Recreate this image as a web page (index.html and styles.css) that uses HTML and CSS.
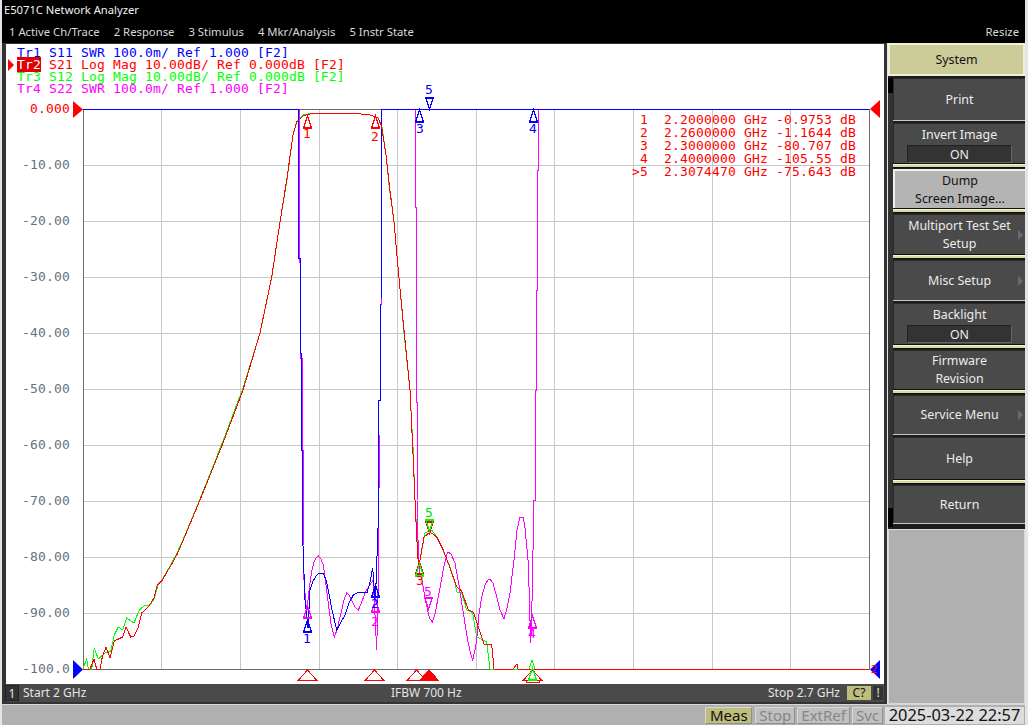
FILE: index.html
```html
<!doctype html>
<html lang="en">
<head>
	<meta charset="utf-8" />
	<title>E5071C Network Analyzer</title>
	<link rel="stylesheet" href="styles.css">
</head>
<body>
	<div class="app">
		<header class="top">
			<div class="title">E5071C Network Analyzer</div>
			<nav class="menu">
				<span>1 Active Ch/Trace</span>
				<span>2 Response</span>
				<span>3 Stimulus</span>
				<span>4 Mkr/Analysis</span>
				<span>5 Instr State</span>
				<span class="resize">Resize</span>
			</nav>
		</header>

		<div class="main">
			<section class="chan">
				<div class="plot">
					<svg class="canvas" viewBox="6 44 878 640" width="878" height="640">
						<defs>
							<path id="up" d="M0 0L-4 12H4ZM-4 11H4"/>
							<path id="down" d="M0 0L-4 -12H4ZM-4 -11H4"/>
							<path id="base" d="M0 0L-9 10H9Z"/>
						</defs>
						<!-- grid -->
						<path class="grid" d="M161.5 109V669M240.5 109V669M319.5 109V669M397.5 109V669M476.5 109V669M554.5 109V669M633.5 109V669M712.5 109V669M790.5 109V669"/>
						<path class="grid" d="M83 165.5H869M83 221.5H869M83 277.5H869M83 333.5H869M83 389.5H869M83 445.5H869M83 501.5H869M83 557.5H869M83 613.5H869"/>
						<path class="frame" d="M83.5 109.5V669.5H869.5V109.5H83.5"/>
						<!-- tick labels -->
						<text class="tick active" x="70" y="113">0.000</text>
						<text class="tick" x="70" y="169">-10.00</text>
						<text class="tick" x="70" y="225">-20.00</text>
						<text class="tick" x="70" y="281">-30.00</text>
						<text class="tick" x="70" y="337">-40.00</text>
						<text class="tick" x="70" y="393">-50.00</text>
						<text class="tick" x="70" y="449">-60.00</text>
						<text class="tick" x="70" y="505">-70.00</text>
						<text class="tick" x="70" y="561">-80.00</text>
						<text class="tick" x="70" y="617">-90.00</text>
						<text class="tick" x="70" y="673">-100.0</text>
						<!-- traces -->
						<polyline class="tr tr3" points="83,669 86.7,659 88.3,669 91.7,669 94.3,648 98.3,659 105,653 110.7,651 114.3,635 118.3,627 122.7,630 126.7,618 134,623 139.3,610 144,606 150,605 154,599 158,585 162,580 170,566 177,553 183,540 200,499 223,441 243,388 260,333 272,276 280,222 287,180 293,135 297,121 303,115 313,113 351,113 370,115 378,118 382,127 386,155 389,185 394,222 399,278 404,333 410,390 413,447 415,500 417,537 418.5,563 420,560 425,533 431.7,530 437,537 443,550 450,567 455,583 456.7,592 461.7,593 466.7,610 472.7,613 476.7,637 486.7,642 490,669 869,669"/>
						<polyline class="tr tr4" points="83,109 299,109 299,262 300,262 300,358 302,358 302,450 303,450 303,545 304,580 306.7,613 308,600 310,583 312,570 314,562 316,558 318.3,556 321,559 323.3,565 326,585 328.3,603 331,624 334.3,637 337,630 341.7,610 344,600 346.7,593 349,595 351.7,600 355,607 358.3,610 361,604 365,593 369,586 373.3,580 376.7,650 378.3,580 379,520 379,488 380,435 380,397 381,350 381,306 382,208 382,109 415,109 415,207 416,207 416,402 417,402 417,500 418,540 419.3,570 422,580 425,598 428,612 430,619 432.3,622 435,614 440,588 444,566 447,554 448.3,552 451,554 455,563 459,585 463.3,613 468,642 471,655 472.7,660 475,650 476.7,640 479,614 481.7,597 485,585 488,580 490,579 493,583 496.7,597 500,610 504,619 507,608 510,593 514,560 517,530 520,517 523.3,517 525,528 528.3,563 530.7,643 531.7,617 534,500 535,500 535,390 536,390 536,290 537,290 537,170 538,170 538,109 869,109"/>
						<polyline class="tr tr1" points="83,109 298.5,109 299,258 300,258 300,353 301,353 301,450 302,450 302,545 303,546 305,600 308,628 310,590 313,581 316.7,575 320,573 323.3,573 326,580 328.3,590 332,610 336.7,630 340,624 345,615 349,603 353.3,595 357,593 360,592 367.3,592 370,582 372.7,568 375,600 376,585 378.3,520 379,400 380,400 380,310 381,310 381.5,109 869,109"/>
						<polyline class="tr tr2" points="83,669 90,669 94,659 96.7,669 100,669 102.3,657 106,647 110,658 114.3,641 122.7,637 126,627 130.7,637 134.3,636 138.3,627 141.7,613 148.3,607 154,598 157.3,585 161.7,581 170,567 177.3,554 183.3,540 200,500 223,443 243,390 260,333 271.7,277 280,222 286.7,180 293,135 296.7,122 303,116 313,113 351.7,113 370,115 378.3,118 381.7,127 386,155 389.3,185 394,222 399,278 404.3,333 410,390 412.7,447 415,500 416.7,537 418.3,563 420,560 424,537 430,532 436.7,537 443.3,550 450,568 456.7,587 461.7,591 468.3,610 473.3,612 476.7,622 484,644 491.7,644 494,669 513,669 517,664 518,669 869,669"/>
						<polyline class="tr tr3" points="529,669 532,660 535,669"/>
						<!-- markers -->
						<g class="mk mk-s21">
							<use href="#up" x="307.5" y="116"/>
							<use href="#up" x="375.5" y="116"/>
							<use href="#up" x="419.5" y="562"/>
							<use href="#down" x="429.5" y="533"/>
							<use href="#base" x="307.5" y="670"/>
							<use href="#base" x="374.5" y="670"/>
							<use href="#base" x="416.5" y="670"/>
							<use href="#base" x="532.5" y="670"/>
							<path class="solid" d="M429 670L420 680H438Z"/>
							<rect x="526" y="680" width="13" height="2"/>
						</g>
						<g class="mk mk-s12">
							<use href="#up" x="419.5" y="564"/>
							<use href="#down" x="429.5" y="531"/>
							<use href="#up" x="532.5" y="668"/>
						</g>
						<g class="mk mk-s11">
							<use href="#up" x="419.5" y="110"/>
							<use href="#up" x="533.5" y="110"/>
							<use href="#down" x="429.5" y="109"/>
							<use href="#up" x="307.5" y="620"/>
							<use href="#up" x="375.5" y="585"/>
						</g>
						<g class="mk mk-s22">
							<use href="#up" x="307.5" y="606"/>
							<use href="#up" x="375.5" y="600"/>
							<use href="#down" x="428.5" y="609"/>
							<use href="#up" x="532.5" y="616"/>
						</g>
						<!-- marker numbers -->
						<text class="num s21" x="307" y="138">1</text>
						<text class="num s21" x="375" y="141">2</text>
						<text class="num s11" x="420" y="133">3</text>
						<text class="num s11" x="533" y="133">4</text>
						<text class="num s11" x="429" y="94">5</text>
						<text class="num s11" x="307" y="643">1</text>
						<text class="num s11" x="375" y="608">2</text>
						<text class="num s22" x="375" y="626">2</text>
						<text class="num s21" x="420" y="585">3</text>
						<text class="num s12" x="429" y="517">5</text>
						<text class="num s22" x="428" y="596">5</text>
						<text class="num s22" x="532" y="638">4</text>
						<!-- scale arrows -->
						<path class="arrow-r" d="M73 101L83 109.5L73 118Z"/>
						<path class="arrow-b" d="M73 660L83 669.5L73 679Z"/>
						<path class="arrow-r" d="M880 100L870 109L880 118Z"/>
						<path class="arrow-b" d="M880 660L870 669.5L880 679Z"/>
						<text class="num s21 side" x="874" y="673">2</text>
					</svg>

					<ul class="legend">
						<li class="s11">Tr1 S11 SWR 100.0m/ Ref 1.000 [F2]</li>
						<li class="s21 on"><b>Tr2</b> S21 Log Mag 10.00dB/ Ref 0.000dB [F2]</li>
						<li class="s12">Tr3 S12 Log Mag 10.00dB/ Ref 0.000dB [F2]</li>
						<li class="s22">Tr4 S22 SWR 100.0m/ Ref 1.000 [F2]</li>
					</ul>

					<div class="readout">
						<div> 1  2.2000000 GHz -0.9753 dB</div>
						<div> 2  2.2600000 GHz -1.1644 dB</div>
						<div> 3  2.3000000 GHz -80.707 dB</div>
						<div> 4  2.4000000 GHz -105.55 dB</div>
						<div>&gt;5  2.3074470 GHz -75.643 dB</div>
					</div>
				</div>
				<div class="chan-status">
					<span class="chnum">1</span>
					<span class="start">Start 2 GHz</span>
					<span class="ifbw">IFBW 700 Hz</span>
					<span class="stop">Stop 2.7 GHz</span>
					<span class="cal">C?</span>
					<span class="bang">!</span>
				</div>
			</section>

			<aside class="keys">
				<div class="key-head">System</div>
				<div class="key-body">
					<div class="strip"></div>
					<ul class="key-list">
						<li class="key">Print</li>
						<li class="key stripe tiny">Invert Image<span class="val">ON</span></li>
						<li class="key stripe pressed">Dump<br>Screen Image...</li>
						<li class="key stripe more">Multiport Test Set<br>Setup</li>
						<li class="key more">Misc Setup</li>
						<li class="key stripe tiny">Backlight<span class="val">ON</span></li>
						<li class="key stripe">Firmware<br>Revision</li>
						<li class="key more">Service Menu</li>
						<li class="key stripe">Help</li>
						<li class="key">Return</li>
					</ul>
				</div>
				<div class="key-rest"></div>
			</aside>
		</div>

		<footer class="status">
			<span class="lamp meas">Meas</span>
			<span class="lamp">Stop</span>
			<span class="lamp">ExtRef</span>
			<span class="lamp">Svc</span>
			<span class="clock">2025-03-22 22:57</span>
		</footer>
	</div>
</body>
</html>
```

FILE: styles.css
```css
* {
	margin: 0;
	padding: 0;
	box-sizing: border-box;
}
ul {
	list-style-type: none;
}
html,
body {
	width: 1028px;
	height: 725px;
	overflow: hidden;
	background-color: #e4e4e4;
}
.app {
	width: 1023px;
	height: 725px;
	margin-left: 2px;
	display: flex;
	flex-direction: column;
	font-family: "Noto Sans", "Liberation Sans", sans-serif;
	font-size: 12px;
	color: #e8e8e8;
}

/* top bars */
.top {
	height: 43px;
	background-color: #000;
	padding-left: 2px;
	flex: none;
}
.title {
	height: 22px;
	line-height: 20px;
	color: #f0f0f0;
	font-size: 11.2px;
}
.menu {
	height: 21px;
	line-height: 20px;
	padding-left: 5px;
	display: flex;
	gap: 14px;
	color: #d8d8d8;
	font-size: 11.3px;
}
.menu .resize {
	margin-left: auto;
	padding-right: 6px;
}

/* channel window */
.main {
	height: 661px;
	flex: none;
	display: flex;
	background-color: #1c1c1c;
}
.chan {
	width: 885px;
	padding: 1px 3px 0 4px;
	display: flex;
	flex-direction: column;
	flex: none;
	background-color: #333;
}
.plot {
	height: 640px;
	width: 878px;
	background-color: #fff;
	position: relative;
	overflow: hidden;
	flex: none;
}
.canvas {
	position: absolute;
	top: 0;
	left: 0;
	display: block;
}
.grid {
	stroke: #c8c8c8;
	stroke-width: 1;
	fill: none;
	shape-rendering: crispEdges;
}
.frame {
	stroke: #6a6a6a;
	stroke-width: 1;
	fill: none;
	shape-rendering: crispEdges;
}
.tick {
	font-family: "DejaVu Sans Mono", "Liberation Mono", monospace;
	font-size: 13px;
	letter-spacing: 0.17px;
	text-anchor: end;
	fill: #66727f;
}
.tick.active {
	fill: #ff0000;
}
.tr {
	fill: none;
	stroke-width: 1;
	shape-rendering: crispEdges;
}
.tr1 { stroke: #0000ff; }
.tr2 { stroke: #ff0000; }
.tr3 { stroke: #00ff00; }
.tr4 { stroke: #ff00ff; }
.mk {
	fill: none;
	stroke-width: 1;
	shape-rendering: crispEdges;
}
.mk-s11 { stroke: #0000ff; }
.mk-s21 { stroke: #ff0000; }
.mk-s12 { stroke: #00ff00; }
.mk-s22 { stroke: #ff00ff; }
.mk .solid {
	fill: #ff0000;
}
.num {
	font-family: "DejaVu Sans Mono", "Liberation Mono", monospace;
	font-size: 13px;
	text-anchor: middle;
}
text.s11 { fill: #0000ff; }
text.s21 { fill: #ff0000; }
text.s12 { fill: #00e000; }
text.s22 { fill: #ff00ff; }
.side {
	font-size: 11px;
}
.arrow-r { fill: #ff0000; }
.arrow-b { fill: #0000ff; }

.legend {
	position: relative;
	padding: 3px 0 0 11px;
	font-family: "DejaVu Sans Mono", "Liberation Mono", monospace;
	font-size: 13px;
	letter-spacing: 0.17px;
	line-height: 12px;
}
.legend li {
	position: relative;
	height: 12px;
	white-space: pre;
}
.legend .s11 { color: #0000ff; }
.legend .s21 { color: #ff0000; }
.legend .s12 { color: #00ff00; }
.legend .s22 { color: #ff00ff; }
.legend b {
	font-weight: normal;
	color: #fff;
	background-color: #e00000;
}
.legend .on::before {
	content: "";
	position: absolute;
	left: -9px;
	top: 0;
	border-left: 6px solid #ff0000;
	border-top: 6px solid transparent;
	border-bottom: 6px solid transparent;
}
.readout {
	position: absolute;
	left: 626px;
	top: 69px;
	font-family: "DejaVu Sans Mono", "Liberation Mono", monospace;
	font-size: 13px;
	letter-spacing: 0.17px;
	line-height: 13px;
	color: #ff0000;
}
.readout div {
	height: 13px;
	white-space: pre;
}

/* strip under plot */
.chan-status {
	height: 18px;
	background-color: #4a4a4a;
	display: flex;
	align-items: center;
	position: relative;
	color: #e4e4e4;
	line-height: 16px;
}
.chnum {
	width: 14px;
	height: 16px;
	margin-left: -1px;
	text-align: center;
	background-color: #333;
	border: 1px solid #222;
}
.start {
	margin-left: 4px;
}
.ifbw {
	position: absolute;
	left: 385px;
}
.stop {
	margin-left: auto;
	margin-right: 7px;
}
.cal {
	width: 24px;
	height: 14px;
	line-height: 14px;
	text-align: center;
	color: #111;
	background-color: #bdbd7c;
}
.bang {
	width: 10px;
	height: 14px;
	line-height: 14px;
	margin: 0 1px 0 2px;
	text-align: center;
	background-color: #333;
}

/* softkeys */
.keys {
	width: 138px;
	flex: none;
	display: flex;
	flex-direction: column;
	border-left: 1px solid #e4e4e4;
	background-color: #1c1c1c;
	font-size: 12.4px;
}
.key-head {
	height: 33px;
	line-height: 30px;
	text-align: center;
	color: #111;
	background-color: #cccc99;
	border: 2px solid #f0f0d8;
	flex: none;
}
.key-body {
	margin-top: 2px;
	height: 449px;
	display: flex;
	flex: none;
}
.strip {
	width: 5px;
	flex: none;
	background: linear-gradient(#000 15px, #333 15px, #333 430px, #000 430px);
}
.key-list {
	flex: 1;
	display: grid;
	grid-template-rows: 45px 46px 45px 46px 43px 47px 45px 42px 48px 41px;
}
.key {
	margin-bottom: 3px;
	padding: 0 3px;
	display: flex;
	flex-direction: column;
	align-items: center;
	justify-content: center;
	text-align: center;
	line-height: 18px;
	position: relative;
	background-color: #4a4a4a;
	border-top: 1px solid #2a2a2a;
	border-left: 1px solid #2a2a2a;
	box-shadow: 0 1px 0 #c8c8c8;
	color: #ececec;
}
.key.stripe {
	margin-bottom: 6px;
	box-shadow: 0 1px 0 #111, 0 2px 0 #f4f4d8, 0 4px 0 #d8d8a0, 0 5px 0 #111;
}
.key.tiny {
	justify-content: flex-start;
	padding-top: 2px;
}
.key.pressed {
	color: #111;
	background-color: #b4b4b4;
	border-top: 2px solid #f0f0f0;
	border-left: 2px solid #f0f0f0;
}
.key.more::after {
	content: "";
	position: absolute;
	right: 2px;
	top: 50%;
	margin-top: -5px;
	border-left: 5px solid #6a6a6a;
	border-top: 5px solid transparent;
	border-bottom: 5px solid transparent;
}
.val {
	width: 105px;
	height: 18px;
	line-height: 17px;
	margin-top: 1px;
	background-color: #333;
	border: 1px solid #222;
	border-right-color: #666;
	border-bottom-color: #666;
}
.key-rest {
	flex: 1;
	margin-top: 2px;
	background-color: #b0b0b0;
	border: 1px solid #d8d8d8;
}

/* bottom status */
.status {
	flex: 1;
	display: flex;
	align-items: flex-start;
	justify-content: flex-end;
	gap: 2px;
	padding: 2px 1px 0 0;
	background-color: #b0b0b0;
	border-top: 1px solid #d8d8d8;
	font-size: 15px;
	line-height: 17px;
}
.lamp {
	height: 17px;
	padding: 0 3px;
	color: #868686;
	background-color: #c0c0c0;
	border: 1px solid #d8d8d8;
	border-right-color: #909090;
	border-bottom-color: #909090;
	line-height: 15px;
}
.lamp.meas {
	width: 47px;
	margin-right: 1px;
	color: #111;
	text-align: center;
	background-color: #bdbd7c;
}
.clock {
	width: 139px;
	height: 17px;
	line-height: 16px;
	text-align: center;
	color: #111;
	background-color: #dcdcdc;
	font-size: 16.4px;
}
```
